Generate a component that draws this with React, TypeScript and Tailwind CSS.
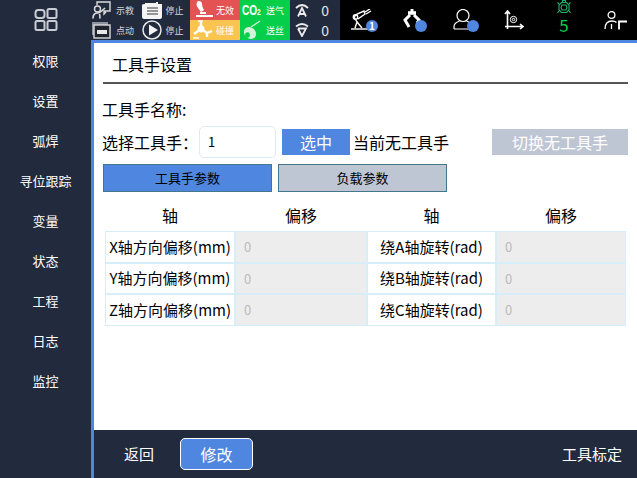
import React from "react";

const font = { fontFamily: '"Noto Sans CJK SC", "Noto Sans", sans-serif' };

const menus = ["权限", "设置", "弧焊", "寻位跟踪", "变量", "状态", "工程", "日志", "监控"];

const rows = [
  ["X轴方向偏移(mm)", "绕A轴旋转(rad)"],
  ["Y轴方向偏移(mm)", "绕B轴旋转(rad)"],
  ["Z轴方向偏移(mm)", "绕C轴旋转(rad)"],
];

const Dot = ({ children }: { children?: React.ReactNode }) => (
  <span className="absolute right-0 -bottom-[2px] flex h-[12px] w-[12px] items-center justify-center rounded-full bg-[#4f86e0] text-[10px] leading-none font-bold text-white">
    {children}
  </span>
);

const TeachIcon = () => (
  <svg width="19" height="18" viewBox="0 0 19 18" fill="none" stroke="#dcdcdc" strokeWidth="1.4">
    <path d="M5 4 V1 H18 V10 H12 V13 L14 11" />
    <circle cx="5.5" cy="8" r="3" />
    <path d="M1 17.5 C1 14 2.5 12 5.5 12 C8 12 10 10 13 7 M8 17.5 C8 15.5 8 14.5 7.5 13" strokeWidth="1.6" />
  </svg>
);

const BtnIcon = () => (
  <svg width="19" height="17" viewBox="0 0 19 17" fill="none">
    <rect x="0" y="0" width="16" height="13" fill="#8f949c" />
    <rect x="2" y="3" width="16" height="13" fill="#20242c" stroke="#dcdcdc" strokeWidth="1.4" />
    <rect x="5" y="8" width="10" height="4" fill="#e8e8e8" />
  </svg>
);

const StopIcon = () => (
  <svg width="20" height="17" viewBox="0 0 20 17">
    <path d="M3 1 H14 V0 H16 V2 H20 V15 Q20 17 18 17 H2 Q0 17 0 15 V3 Q0 2 3 2 Z" fill="#f4f4f4" />
    <path d="M5 6 H16 M5 9 H16 M5 12 H16" stroke="#777" strokeWidth="1.3" />
  </svg>
);

const PlayIcon = () => (
  <svg width="20" height="20" viewBox="0 0 20 20">
    <circle cx="10" cy="10" r="9" fill="none" stroke="#e8e8e8" strokeWidth="1.5" />
    <path d="M7 4.5 L16 10 L7 15.5 Z" fill="#f4f4f4" />
  </svg>
);

const TorchIcon = () => (
  <svg width="22" height="18" viewBox="0 0 22 18" fill="#fff">
    <path d="M6 0 Q10 0 10 3 Q10 6 12 9 L9 11 L6 7 Q3 3 6 0 Z" />
    <rect x="8" y="11" width="6" height="2" />
    <rect x="4" y="14" width="17" height="2" />
  </svg>
);

const RobotIcon = () => (
  <svg width="23" height="20" viewBox="0 0 23 20" fill="none" stroke="#fff" strokeWidth="2.4">
    <path d="M2 14 L9 9 L15 13 L20 11 M9 9 L9 2 M15 13 L15 17" />
    <circle cx="9" cy="9" r="2.2" fill="#fff" />
    <path d="M1 18 H7 M6 1 H11" strokeWidth="1.6" />
  </svg>
);

const SpoolIcon = () => (
  <svg width="19" height="20" viewBox="0 0 19 20" fill="none">
    <path d="M9 7 L18 1" stroke="#d6f5dc" strokeWidth="1.2" />
    <ellipse cx="8" cy="13" rx="6.5" ry="5.5" transform="rotate(40 8 13)" fill="#d2f3da" />
    <ellipse cx="5.5" cy="15" rx="2.4" ry="2.8" fill="#05cf4a" />
  </svg>
);

const ArrowUp = () => (
  <svg width="14" height="14" viewBox="0 0 14 14" fill="none" stroke="#ececec" strokeWidth="1.8">
    <path d="M1 5 Q7 -1 13 5" />
    <path d="M3 13.5 L7 5 L11 13.5 M4.5 11 H9.5" />
  </svg>
);

const ArrowDown = () => (
  <svg width="14" height="14" viewBox="0 0 14 14" fill="none" stroke="#ececec" strokeWidth="1.8">
    <path d="M1 3.5 Q7 -1.5 13 3.5" />
    <path d="M3 5.5 L7 13 L11 5.5 H3" />
  </svg>
);

const ArmIcon = () => (
  <svg width="21" height="21" viewBox="0 0 21 21" fill="none" stroke="#fff" strokeWidth="1.4">
    <path d="M0 20 H18" />
    <path d="M4 19 L6 13 L11 19" />
    <path d="M6 13 L3 8 L6 5 L13 2 L14 5 L7 10" />
    <circle cx="4.5" cy="8" r="2.2" />
    <path d="M14 3 L19 0 M15 5 L20 2" />
  </svg>
);

const GripperIcon = () => (
  <svg width="18" height="21" viewBox="0 0 18 21" fill="none" stroke="#fff" strokeWidth="3">
    <path d="M7 6 L2 11 L6 18" />
    <path d="M11 6 L16 11 L14 14" />
    <path d="M5 4 H13" strokeWidth="3.6" />
    <path d="M9 0 V3" />
  </svg>
);

const UserIcon = () => (
  <svg width="21" height="21" viewBox="0 0 21 21" fill="none" stroke="#fff" strokeWidth="1.2">
    <circle cx="10" cy="6.5" r="6" />
    <path d="M1 20 V17.5 Q1 14 6.5 12 M13.5 12 Q19 14 19 20 M1 20 H19" />
  </svg>
);

const AxisIcon = () => (
  <svg width="20" height="20" viewBox="0 0 20 20" fill="none" stroke="#fff" strokeWidth="1.6">
    <path d="M3.5 1 V19 M1 4 L3.5 1 L6 4 M1 16.5 H19 M16 14 L19 16.5 L16 19" />
    <circle cx="9.5" cy="9.5" r="3.2" strokeWidth="1" />
    <circle cx="9.5" cy="9.5" r="1.2" strokeWidth="1" />
  </svg>
);

const TurtleIcon = () => (
  <svg width="14" height="15" viewBox="0 0 14 15" fill="none" stroke="#27b36a" strokeWidth="1.1">
    <path d="M4.5 2.5 H9.5 L12 5 V10 L9.5 12.5 H4.5 L2 10 V5 Z" />
    <path d="M5.5 2.5 V0.5 H8.5 V2.5 M5 5 H9 L10 7.5 L9 10 H5 L4 7.5 Z M2 4 L0.5 2.5 M12 4 L13.5 2.5 M2 11 L0.5 13 M12 11 L13.5 13" />
  </svg>
);

const SeatIcon = () => (
  <svg width="23" height="19" viewBox="0 0 23 19" fill="none" stroke="#fff" strokeWidth="1.3">
    <circle cx="7.5" cy="4" r="3.4" />
    <path d="M1 18 Q1 10 8 10 Q11 10 12.5 11.5 M7.5 13 V18" />
    <path d="M15 18.5 V10.5 H23" strokeWidth="1.8" />
  </svg>
);

const GridIcon = () => (
  <svg width="24" height="24" viewBox="0 0 24 24" fill="none" stroke="#c9ccd2" strokeWidth="2">
    <rect x="1.5" y="2" width="9" height="8" rx="2.8" />
    <rect x="13.5" y="1" width="9" height="9" rx="1.5" />
    <rect x="1.5" y="13" width="9" height="9" rx="1.5" />
    <rect x="13.5" y="13" width="9" height="9" rx="1.5" />
  </svg>
);

const Status = ({ icon, label, className = "" }: { icon: React.ReactNode; label: string; className?: string }) => (
  <div className={`flex h-5 items-center ${className}`}>
    <span className="flex w-[25px] shrink-0 items-center pl-[1px]">{icon}</span>
    <span className="text-[9px] leading-none whitespace-nowrap">{label}</span>
  </div>
);

export default function App() {
  return (
    <div className="flex h-[478px] w-[637px] overflow-hidden bg-[#222b3d]" style={font}>
      <aside className="flex w-[91px] shrink-0 flex-col items-center text-[13px] text-white">
        <div className="flex h-10 items-center justify-center">
          <GridIcon />
        </div>
        {menus.map((m) => (
          <div key={m} className="flex h-10 items-center justify-center leading-none">
            {m}
          </div>
        ))}
      </aside>

      <div className="flex min-w-0 flex-1 flex-col">
        <header className="flex h-10 shrink-0">
          <div className="grid w-[99px] shrink-0 grid-cols-2 text-[#d6d6d6]">
            <Status icon={<TeachIcon />} label="示教" />
            <Status icon={<StopIcon />} label="停止" />
            <Status icon={<BtnIcon />} label="点动" />
            <Status icon={<PlayIcon />} label="停止" />
          </div>
          <div className="w-[50px] shrink-0 pl-0 text-white">
            <Status icon={<TorchIcon />} label="无效" className="bg-[#e35353] pl-[1px]" />
            <Status icon={<RobotIcon />} label="碰撞" className="bg-[#f9c44f] pl-[1px]" />
          </div>
          <div className="w-[50px] shrink-0 bg-[#05cf4a] pl-[1px] text-white">
            <Status
              icon={
                <span className="origin-left scale-x-[0.72] font-['Liberation_Sans'] text-[14px] leading-none font-bold whitespace-nowrap">
                  CO<span className="text-[9px]">2</span>
                </span>
              }
              label="送气"
            />
            <Status icon={<SpoolIcon />} label="送丝" />
          </div>
          <div className="w-[50px] shrink-0 text-[#e6e6e6]">
            <div className="flex h-5 items-center justify-between pr-[11px] pl-[5px]">
              <ArrowUp />
              <span className="text-[14px] leading-none">0</span>
            </div>
            <div className="flex h-5 items-center justify-between pr-[11px] pl-[5px]">
              <ArrowDown />
              <span className="text-[14px] leading-none">0</span>
            </div>
          </div>
          <div className="flex flex-1 items-center bg-black pl-[11px]">
            <div className="relative mt-[-1px] flex w-[27px]">
              <ArmIcon />
              <Dot>1</Dot>
            </div>
            <div className="relative mt-[-1px] ml-[25px] flex w-[24px]">
              <GripperIcon />
              <Dot />
            </div>
            <div className="relative mt-[-1px] ml-[26px] flex w-[26px]">
              <UserIcon />
              <Dot />
            </div>
            <div className="ml-[25px]">
              <AxisIcon />
            </div>
            <div className="ml-[33px] flex w-[14px] flex-col items-center self-start">
              <TurtleIcon />
              <span className="text-[17px] leading-[20px] text-[#05cf4a]">5</span>
            </div>
            <div className="ml-[33px]">
              <SeatIcon />
            </div>
          </div>
        </header>

        <main className="flex min-h-0 flex-1 flex-col border-t-[3px] border-l-[3px] border-[#4f86e0] bg-white pt-[8px] pr-[9px] pl-[9px] text-black">
          <div className="border-b-2 border-[#555] pb-[5px] pl-[9px] text-[16px] leading-[26px]">工具手设置</div>

          <div className="mt-[13px] -ml-[1px] text-[16px] leading-[24px]">工具手名称:</div>

          <div className="mt-[5px] flex h-[32px] items-center text-[16px]">
            <span className="-ml-[1px] w-[97px]">选择工具手：</span>
            <div className="flex h-[32px] w-[77px] items-center rounded-[5px] border border-[#dcebf5] pl-2 text-[13px]">1</div>
            <button className="ml-[6px] h-[26px] w-[68px] bg-[#4f86e0] text-white">选中</button>
            <span className="ml-[3px]">当前无工具手</span>
            <button className="ml-auto h-[26px] w-[136px] bg-[#bfc6d3] text-white">切换无工具手</button>
          </div>

          <div className="mt-[6px] flex gap-[6px] text-[13px]">
            <button className="h-[28px] w-[169px] border border-[#44778a] bg-[#4f86e0]">工具手参数</button>
            <button className="h-[28px] w-[169px] border border-[#44778a] bg-[#bfc6d3]">负载参数</button>
          </div>

          <div className="mt-[13px] ml-[2px] grid w-[521px] grid-cols-[130px_132px_129px_130px] text-[15px]">
            {["轴", "偏移", "轴", "偏移"].map((h, i) => (
              <div key={i} className="flex h-[26px] items-center justify-center pb-[7px] text-[16px] leading-none">
                {h}
              </div>
            ))}
            {rows.map((r) =>
              r.map((label) => (
                <React.Fragment key={label}>
                  <div className="flex h-[31.5px] items-center justify-center border border-[#d6eef8] whitespace-nowrap">
                    {label}
                  </div>
                  <div className="flex h-[31.5px] items-center border border-[#d6eef8] bg-[#ededed] pl-2 text-[13px] text-[#bbbbbb]">
                    0
                  </div>
                </React.Fragment>
              )),
            )}
          </div>
        </main>

        <footer className="flex h-12 shrink-0 items-center border-l-[3px] border-[#4f86e0] pr-[15px] pl-[30px] text-white">
          <span className="text-[15px]">返回</span>
          <button className="ml-[26px] h-[32px] w-[73px] rounded-[5px] border border-white bg-[#4f86e0] text-[16px]">修改</button>
          <span className="ml-auto text-[15px]">工具标定</span>
        </footer>
      </div>
    </div>
  );
}
